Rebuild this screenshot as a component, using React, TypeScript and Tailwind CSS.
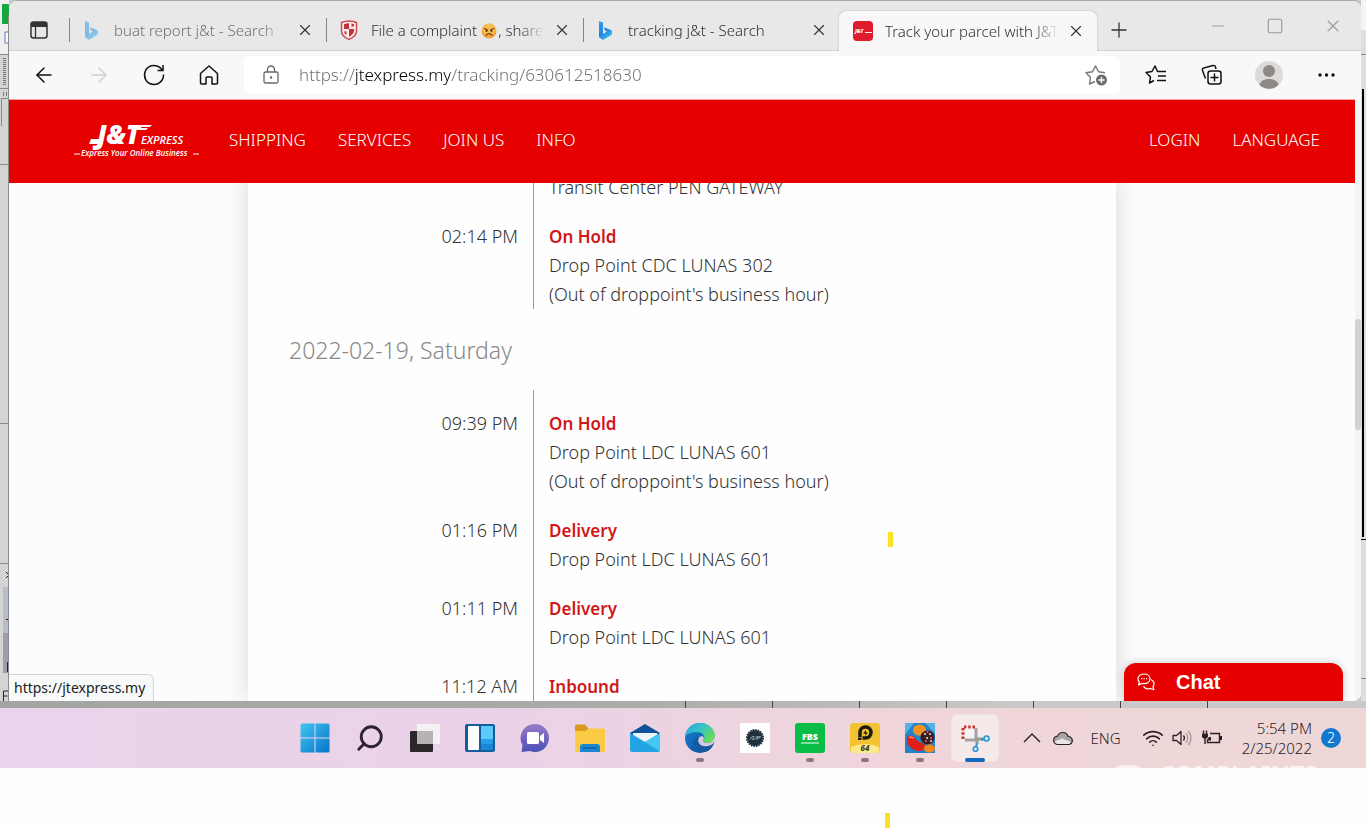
import React from 'react';
import {
  ArrowLeft,
  ArrowRight,
  ChevronUp,
  Minus,
  Plus,
  Search,
  Square,
  Wifi,
  X,
} from 'lucide-react';

type Entry = { time: string; status: string; lines: string[] };

const tabs = [
  { title: 'buat report j&t - Search', icon: <BingLogo />, dim: true, active: false },
  { title: 'File a complaint', icon: <ShieldLogo />, dim: false, active: false, emoji: true },
  { title: 'tracking j&t - Search', icon: <BingLogo />, dim: false, active: false },
  { title: 'Track your parcel with J&T', icon: <JntFavicon />, dim: false, active: true },
];

const fridayEntries: Entry[] = [
  { time: '02:14 PM', status: 'On Hold', lines: ['Drop Point CDC LUNAS 302', "(Out of droppoint's business hour)"] },
];

const saturdayEntries: Entry[] = [
  { time: '09:39 PM', status: 'On Hold', lines: ['Drop Point LDC LUNAS 601', "(Out of droppoint's business hour)"] },
  { time: '01:16 PM', status: 'Delivery', lines: ['Drop Point LDC LUNAS 601'] },
  { time: '01:11 PM', status: 'Delivery', lines: ['Drop Point LDC LUNAS 601'] },
  { time: '11:12 AM', status: 'Inbound', lines: [] },
];

/* ---------- favicons ---------- */

function BingLogo() {
  return (
    <svg className="h-5 w-5" viewBox="0 0 20 20" fill="none">
      <defs>
        <linearGradient id="bing" x1="3" y1="2" x2="16" y2="19" gradientUnits="userSpaceOnUse">
          <stop stopColor="#2f9ee8" />
          <stop offset="0.5" stopColor="#2384dd" />
          <stop offset="1" stopColor="#3ed0f5" />
        </linearGradient>
      </defs>
      <path d="M3 1 7 2.500V14l4-2.400-2-1L7.700 7.300 14 9.600c2.800 1.200 2.600 4.700.7 6l-7 4c-.5.3-1 .2-1.400-.1L3 17.200Z" fill="url(#bing)" />
    </svg>
  );
}

function ShieldLogo() {
  return (
    <svg className="h-5 w-5" viewBox="0 0 20 20" fill="none">
      <path d="M2.500 2.500Q10-.5 17.500 2.500V11c0 4-3.500 6.800-7.500 8.400C6 17.800 2.500 15 2.500 11Z" fill="#fbe9e9" stroke="#c8464e" strokeWidth="1.400" />
      <path d="M5 4.300Q7.500 3.300 10 3.300V9H5ZM10 9h5v2c0 2.500-2.500 4.500-5 5.800Z" fill="#c0323c" />
      <path d="M12.500 3.600 15 4.300V6.500h-2.500ZM5 11.500h2.500V15C6 14 5.200 12.800 5 11.500Z" fill="#c0323c" />
    </svg>
  );
}

function JntFavicon() {
  return (
    <svg className="h-5 w-5" viewBox="0 0 20 20">
      <rect width="20" height="20" rx="4" fill="#e01b2b" />
      <text x="2" y="12" fontSize="5" fontWeight="800" fontStyle="italic" fill="#fff" fontFamily="Open Sans, sans-serif">J&amp;T</text>
      <path d="M12 11.500h7" stroke="#fff" strokeWidth="1" />
    </svg>
  );
}

function AngryFace() {
  return (
    <svg className="mr-px ml-1 inline-block h-4 w-4 align-[-3px]" viewBox="0 0 16 16" fill="none">
      <circle cx="8" cy="8" r="7.500" fill="#f2a63b" />
      <circle cx="8" cy="6.500" r="6" fill="#f8bd4e" />
      <path d="m3.500 5.500 3 1.500M12.500 5.500l-3 1.500M5 12.300c1.500-2.200 4.500-2.200 6 0" stroke="#6b3a14" strokeWidth="1.200" strokeLinecap="round" />
      <circle cx="5.500" cy="8" r="1.100" fill="#6b3a14" />
      <circle cx="10.500" cy="8" r="1.100" fill="#6b3a14" />
    </svg>
  );
}

/* ---------- browser chrome ---------- */

function TabStrip() {
  return (
    <div className="flex h-[50px] shrink-0 items-end border-b border-[#d2d2d2] bg-[#e8e8e8]">
      <button aria-label="Tab actions" className="flex h-10 w-[60px] shrink-0 items-center justify-center">
        <svg className="h-[18px] w-[18px]" viewBox="0 0 18 18" fill="none">
          <rect x="1" y="1" width="16" height="16" rx="2.500" stroke="#333" strokeWidth="1.500" />
          <path d="M1 3.500A2.500 2.500 0 0 1 3.500 1h11A2.500 2.500 0 0 1 17 3.500V6H1Z" fill="#333" />
          <path d="M5.500 6v11" stroke="#333" strokeWidth="1.300" />
        </svg>
      </button>
      {tabs.map((tab) => (
        <div
          key={tab.title}
          className={
            tab.active
              ? '-mb-px -ml-px flex h-10 w-[258px] shrink-0 items-center rounded-t-lg bg-[#f8f8f8] pr-3 pb-px pl-[14px] shadow-[0_0_2px_rgba(0,0,0,0.25)] [clip-path:inset(-3px_-3px_0_-3px)]'
              : 'flex h-10 w-[257px] shrink-0 items-center pr-3'
          }
        >
          {!tab.active && <span className="mr-3 h-6 w-px bg-[#858585]" />}
          <span className={tab.dim ? 'opacity-50' : ''}>{tab.icon}</span>
          <button
            className={
              (tab.dim ? 'text-[#707070]' : 'text-[#303030]') +
              ' ml-3 w-[174px] overflow-hidden text-left text-[15px] leading-5 font-[350] whitespace-nowrap [mask-image:linear-gradient(90deg,#000_85%,transparent)]'
            }
          >
            {tab.title}
            {tab.emoji && <><AngryFace />, share</>}
          </button>
          <button aria-label={'Close ' + tab.title} className="ml-auto">
            <X className="h-[18px] w-[18px] text-[#333]" strokeWidth={1.5} />
          </button>
        </div>
      ))}
      <button aria-label="New tab" className="ml-2 flex h-10 w-7 items-center justify-center">
        <Plus className="h-6 w-6 text-[#333]" strokeWidth={1.3} />
      </button>
      <div className="mb-[14px] ml-auto flex items-center gap-[39px] pr-[18px] text-[#999]">
        <button aria-label="Minimize"><Minus className="h-[18px] w-[18px]" strokeWidth={1.3} /></button>
        <button aria-label="Maximize"><Square className="h-[18px] w-[18px]" strokeWidth={1.5} /></button>
        <button aria-label="Close window"><X className="h-5 w-5" strokeWidth={1.3} /></button>
      </div>
    </div>
  );
}

function AddressBar() {
  return (
    <div className="flex h-12 shrink-0 items-center bg-[#f8f8f8]">
      <div className="flex w-[235px] shrink-0 items-center gap-[31px] pl-[23px] text-[#111]">
        <button aria-label="Back">
          <ArrowLeft className="h-6 w-6" strokeWidth={1.5} />
        </button>
        <button aria-label="Forward" className="text-[#d0d0d0]">
          <ArrowRight className="h-6 w-6" strokeWidth={1.5} />
        </button>
        <button aria-label="Refresh">
          <svg className="h-6 w-6" viewBox="0 0 24 24" fill="none" stroke="currentColor" strokeWidth="1.500">
            <path d="M21.500 11.500A9.500 9.500 0 1 1 17.500 4.200L20.500 7M21 2v5.500h-5.500" />
          </svg>
        </button>
        <button aria-label="Home">
          <svg className="h-6 w-6" viewBox="0 0 24 24" fill="none" stroke="currentColor" strokeWidth="1.500" strokeLinejoin="round">
            <path d="M3.500 10.500 12 3l8.500 7.500V20a1 1 0 0 1-1 1H15v-6a1 1 0 0 0-1-1h-4a1 1 0 0 0-1 1v6H4.500a1 1 0 0 1-1-1Z" />
          </svg>
        </button>
      </div>
      <div className="flex h-[38px] flex-1 items-center rounded-md bg-white pr-3 pl-4">
        <svg className="h-[22px] w-[22px] text-[#666]" viewBox="0 0 22 22" fill="none" stroke="currentColor" strokeWidth="1.300">
          <rect x="4" y="8" width="14" height="11" rx="1.500" />
          <path d="M7.500 8V5.500a3.500 3.500 0 0 1 7 0V8" />
          <circle cx="11" cy="13.500" r=".6" fill="currentColor" />
        </svg>
        <input
          aria-label="Address"
          defaultValue="https://jtexpress.my/tracking/630612518630"
          className="ml-[17px] min-w-0 flex-1 bg-[linear-gradient(90deg,#6c6c6c_57px,#000_57px,#000_151px,#6c6c6c_151px)] bg-clip-text text-[17px] leading-6 font-light text-transparent caret-black outline-none"
        />
        <button aria-label="Add to favourites">
          <svg className="h-6 w-6" viewBox="0 0 24 24" fill="none">
            <path d="M11 18.500 5.500 21l1-6.500L2 9.800l6.500-1L11.500 3l3 5.800 6.500 1" stroke="#777" strokeWidth="1.400" strokeLinejoin="round" />
            <circle cx="17.500" cy="17" r="5.500" fill="#6d6d6d" />
            <path d="M17.500 14v6M14.500 17h6" stroke="#fff" strokeWidth="1.300" />
          </svg>
        </button>
      </div>
      <div className="flex shrink-0 items-center pr-[22px] pl-6 text-[#111]">
        <button aria-label="Favourites" className="mr-8">
          <svg className="h-6 w-6" viewBox="0 0 24 24" fill="none" stroke="currentColor" strokeWidth="1.500" strokeLinejoin="round">
            <path d="M10 17.500 5.500 20l1-6L2 9.500l6-1L11 3l2.500 5.500H22M14 13h8M13 17.500h9" />
          </svg>
        </button>
        <button aria-label="Collections" className="mr-[31px]">
          <svg className="h-6 w-6" viewBox="0 0 24 24" fill="none" stroke="currentColor" strokeWidth="1.500">
            <path d="M5.500 15.500 2.500 7.500a2 2 0 0 1 1.300-2.600L13 2.500a2 2 0 0 1 2.500 1.500l.5 2" />
            <rect x="8" y="8" width="13" height="13" rx="2.500" />
            <path d="M14.500 10.500v8M10.500 14.500h8" />
          </svg>
        </button>
        <button aria-label="Profile" className="mr-8">
          <svg className="h-7 w-7" viewBox="0 0 28 28">
            <circle cx="14" cy="14" r="14" fill="#dcdbd9" />
            <circle cx="14" cy="10" r="6" fill="#8d8987" />
            <path d="M4.500 24c1-8 18-8 19 0a14 14 0 0 1-19 0" fill="#8d8987" />
          </svg>
        </button>
        <button aria-label="Settings and more">
          <svg className="h-6 w-6" viewBox="0 0 24 24" fill="currentColor">
            <circle cx="5" cy="12" r="1.700" />
            <circle cx="11.500" cy="12" r="1.700" />
            <circle cx="18" cy="12" r="1.700" />
          </svg>
        </button>
      </div>
    </div>
  );
}

/* ---------- J&T page ---------- */

function SiteHeader() {
  return (
    <header className="flex h-[84px] shrink-0 items-center border-t border-[#f3a0a0] bg-[#e60000] pr-[35px] pb-1 pl-[65px] text-[17px] leading-6 font-[350] text-white">
      <a href="#" aria-label="J&T Express" className="mr-[30px] shrink-0">
        <svg className="h-12 w-[125px]" viewBox="0 0 125 48" fill="#fff" fontFamily="Open Sans, sans-serif" fontStyle="italic">
          <text x="23" y="28" fontSize="26" fontWeight="800">J&amp;T</text>
          <path d="M17 23h9l-1 5H15ZM60 9h18l-2 2H60ZM61 12h13l-2 2H61Z" />
          <text x="67" y="28" fontSize="11" fontWeight="600">EXPRESS</text>
          <text x="7" y="40" fontSize="8" fontWeight="600">Express Your Online Business</text>
          <path d="M0 38h6M119 38h6" stroke="#fff" strokeWidth="1" />
        </svg>
      </a>
      <nav className="flex gap-8">
        <a href="#">SHIPPING</a>
        <a href="#">SERVICES</a>
        <a href="#">JOIN US</a>
        <a href="#">INFO</a>
      </nav>
      <nav className="ml-auto flex gap-8">
        <a href="#">LOGIN</a>
        <a href="#">LANGUAGE</a>
      </nav>
    </header>
  );
}

function TrackingRow({ entry }: { entry: Entry }) {
  return (
    <li className="flex">
      <time className="w-[285px] shrink-0 pr-[15px] text-right">{entry.time}</time>
      <div className="pl-4">
        <h3 className="text-[17px] font-semibold text-[#d01818]">{entry.status}</h3>
        {entry.lines.map((line) => (
          <p key={line}>{line}</p>
        ))}
      </div>
    </li>
  );
}

function TrackingPage() {
  return (
    <main className="relative min-h-0 flex-1 overflow-hidden bg-[#fafcfd]">
      <div className="mx-auto min-h-full w-[868px] max-w-full bg-[#fefefe] text-lg leading-[29px] font-[350] text-[#333] shadow-[0_0_24px_rgba(0,0,0,0.14)]">
        <div className="-mt-[10px] bg-[linear-gradient(#999,#999)] bg-[length:1px_100%] bg-[position:285px_0] bg-no-repeat">
          <p className="mb-5 pl-[301px]">Transit Center PEN GATEWAY</p>
          <ul>
            {fridayEntries.map((entry) => <TrackingRow key={entry.time} entry={entry} />)}
          </ul>
        </div>
        <h2 className="pt-[27px] pb-[25px] pl-[41px] text-[23px] font-light text-[#888]">2022-02-19, Saturday</h2>
        <ul className="flex flex-col gap-5 bg-[linear-gradient(#999,#999)] bg-[length:1px_100%] bg-[position:285px_0] bg-no-repeat pt-[19px]">
          {saturdayEntries.map((entry) => <TrackingRow key={entry.time} entry={entry} />)}
        </ul>
      </div>

      <span className="absolute top-[349px] left-[879px] h-[15px] w-[5px] bg-[#fbe122]" />

      <div className="absolute bottom-0 left-0 rounded-tr-md border-t border-r border-[#d5d5d5] bg-[#f8f9f9] py-[3px] pr-2 pl-[5px] text-sm leading-5 text-[#222]">
        https://jtexpress.my
      </div>

      <button className="absolute right-3 bottom-0 flex h-[38px] w-[219px] items-center rounded-t-xl bg-[#e60000] pl-[13px] font-['Liberation_Sans',sans-serif] text-xl font-bold text-white shadow-[0_0_8px_rgba(0,0,0,0.2)]">
        <svg className="mr-[21px] h-[18px] w-[18px]" viewBox="0 0 18 18" fill="none" stroke="#fff" strokeWidth="1.200" strokeLinejoin="round">
          <path d="M7 1c3.500 0 6 2 6 4.800s-2.500 4.900-6 4.900l-2-.3L1.500 12l.9-2.900A4.500 4.500 0 0 1 1 5.800C1 3 3.500 1 7 1Z" />
          <path d="M14 6.500c4 2 3.500 5.500 2 7l.8 3.200-3.300-1.200c-3 1-5.500 0-7-2.200" />
          <path d="M4 5.700h1.200M6.500 5.700h1.200M9 5.700h1.200" />
        </svg>
        Chat
      </button>
    </main>
  );
}

/* ---------- taskbar ---------- */

function WindowsIcon() {
  return (
    <svg className="h-[30px] w-[30px]" viewBox="0 0 30 30">
      <defs>
        <linearGradient id="win" x1="0" y1="0" x2="1" y2="1">
          <stop stopColor="#43c6f2" />
          <stop offset="1" stopColor="#0573c8" />
        </linearGradient>
      </defs>
      <path d="M2 .5h12.500v14H.5V2A1.500 1.500 0 0 1 2 .5ZM15.500.5H28A1.500 1.500 0 0 1 29.500 2v12.500h-14ZM.5 15.500h14v14H2A1.500 1.500 0 0 1 .5 28ZM15.500 15.500h14V28a1.500 1.500 0 0 1-1.500 1.500H15.500Z" fill="url(#win)" />
    </svg>
  );
}

function TaskViewIcon() {
  return (
    <svg className="h-[30px] w-[30px]" viewBox="0 0 30 30">
      <rect x="0" y="8" width="23" height="21" rx="1" fill="#2b272b" />
      <rect x="7" y="1" width="23" height="20" rx="1" fill="#f4f1f4" />
      <path d="M7 8h16v13H7Z" fill="#b5b3b4" />
    </svg>
  );
}

function WidgetsIcon() {
  return (
    <svg className="h-[30px] w-[30px]" viewBox="0 0 30 30">
      <rect y="1" width="30" height="28" rx="2" fill="#155c9f" />
      <rect x="3" y="3" width="11" height="24" rx="1" fill="#fff" />
      <rect x="16" y="3" width="12" height="13" fill="#5ccbf7" />
      <rect x="16" y="16" width="12" height="5" fill="#259ee4" />
      <rect x="16" y="21" width="12" height="6" fill="#1b86d6" />
    </svg>
  );
}

function TeamsIcon() {
  return (
    <svg className="h-[30px] w-[30px]" viewBox="0 0 30 30">
      <defs>
        <linearGradient id="teams" x1="0" y1="0" x2="0" y2="1">
          <stop stopColor="#9a7bc8" />
          <stop offset="1" stopColor="#4b50b8" />
        </linearGradient>
      </defs>
      <path d="M15 1a14 14 0 1 1-5 27.100L1.500 29l1-7A14 14 0 0 1 15 1Z" fill="url(#teams)" />
      <rect x="7" y="9" width="12" height="12" rx="1.500" fill="#fff" />
      <path d="m20 13 4-3v10l-4-3Z" fill="#fff" />
    </svg>
  );
}

function FolderIcon() {
  return (
    <svg className="h-[30px] w-[30px]" viewBox="0 0 30 30">
      <path d="M0 3a1.500 1.500 0 0 1 1.500-1.500H10l3.500 4V9H0Z" fill="#dc9a1d" />
      <path d="M0 8h10l4-2.500h14.500A1.500 1.500 0 0 1 30 7v21a1 1 0 0 1-1 1H1a1 1 0 0 1-1-1Z" fill="#fbcb45" />
      <path d="M5 29v-5a3 3 0 0 1 3-3h14a3 3 0 0 1 3 3v5Z" fill="#1b86d2" />
      <path d="M8 25h14" stroke="#0f5ea6" strokeWidth="1.500" />
    </svg>
  );
}

function MailIcon() {
  return (
    <svg className="h-[30px] w-[30px]" viewBox="0 0 30 30">
      <path d="M0 10 15 1l15 9v4H0Z" fill="#10529a" />
      <path d="M3 10h24v5l-12 8-12-8Z" fill="#eef4f9" />
      <path d="m0 10 15 9 15-9v17a2 2 0 0 1-2 2H2a2 2 0 0 1-2-2Z" fill="#23a5e5" />
      <path d="m15 19 15-9v17c0 .5-.2 1-.5 1.300Z" fill="#46c7f3" />
    </svg>
  );
}

function EdgeIcon() {
  return (
    <svg className="h-[30px] w-[30px]" viewBox="0 0 30 30">
      <defs>
        <linearGradient id="edgeTop" x1="0" y1="0" x2="1" y2="0.6">
          <stop stopColor="#2ba6df" />
          <stop offset="0.5" stopColor="#35c2c8" />
          <stop offset="1" stopColor="#66dd5a" />
        </linearGradient>
        <linearGradient id="edgeLow" x1="0" y1="0" x2="1" y2="1">
          <stop stopColor="#1681d6" />
          <stop offset="1" stopColor="#0f4a95" />
        </linearGradient>
      </defs>
      <circle cx="15" cy="15" r="15" fill="url(#edgeLow)" />
      <path d="M0 14C1 5 7 0 15 0c9 0 15 6 15 13 0 5-4 7-7.500 7-3 0-5-1.200-4-2.800 2-3 0-8-6-8C6 9 1 11 0 14Z" fill="url(#edgeTop)" />
      <path d="M17.500 13c-4 0-6 5-3 8.500 3 3 9 2.500 13.500-.5l1-2 1 3-4 4 4 4V12c0 5-4 8-7.500 8-3 0-5-1.200-4-2.800.8-1.500.5-3-1-4.200Z" fill="#ecd5e3" opacity=".9" />
      <path d="M9 16c-1 7 5 13 11 13 4-1 7-4 8-7-5 3-17 2-14.500-7Z" fill="#17589f" />
    </svg>
  );
}

function GearIcon() {
  return (
    <svg className="h-[30px] w-[30px]" viewBox="0 0 30 30">
      <rect width="30" height="30" fill="#fff" />
      <circle cx="15" cy="15" r="8" fill="#1f313d" />
      <circle cx="15" cy="15" r="8.300" fill="none" stroke="#1f313d" strokeWidth="1.500" strokeDasharray="1.600 1" />
      <path d="M10 16.500 12 13.500h2l-1.500 3h2l2-3h1.500l-1.500 3M17.500 16.500l1.500-3h1.500l-1 1.500H18" stroke="#8ba0ad" strokeWidth="1" fill="none" />
    </svg>
  );
}

function FbsIcon() {
  return (
    <svg className="h-[30px] w-[30px]" viewBox="0 0 30 30">
      <rect width="30" height="30" rx="3" fill="#09bd45" />
      <text x="15" y="17" textAnchor="middle" fontSize="9" fontWeight="800" fill="#fff" fontFamily="Open Sans, sans-serif">FBS</text>
      <path d="M6 20h18" stroke="#fff" strokeWidth="1" />
    </svg>
  );
}

function LdPlayerIcon() {
  return (
    <svg className="h-[30px] w-[30px]" viewBox="0 0 30 30">
      <rect width="30" height="30" rx="4" fill="#f2c230" />
      <path d="M1 24q14-6 28 0v3a3 3 0 0 1-3 3H4a3 3 0 0 1-3-3Z" fill="#fbe98c" />
      <path d="M10 14V9.500a5.500 5.500 0 1 1 5.500 5.500H12.500" fill="none" stroke="#1d1a10" strokeWidth="3.500" />
      <rect x="8" y="14.500" width="3.500" height="2.500" fill="#1d1a10" />
      <path d="m16 7-3 3.500h2.500L15 13l3-3.500h-2Z" fill="#1d1a10" />
      <text x="15" y="28" textAnchor="middle" fontSize="8" fontWeight="700" fontStyle="italic" fill="#3a3213" fontFamily="Open Sans, sans-serif">64</text>
    </svg>
  );
}

function CandyIcon() {
  return (
    <svg className="h-[30px] w-[30px]" viewBox="0 0 30 30">
      <rect width="30" height="30" fill="#2583c9" />
      <path d="M0 0h9L0 12ZM20 0h10v10Z" fill="#55b2e6" />
      <ellipse cx="14.500" cy="7" rx="6.500" ry="5.500" fill="#f29222" />
      <circle cx="22.500" cy="14.500" r="7" fill="#3b1d1c" />
      <g fill="#f5e6d6">
        <circle cx="20" cy="11" r="1" /><circle cx="25" cy="11" r="1" /><circle cx="22" cy="15" r="1" /><circle cx="26" cy="18" r="1" />
      </g>
      <g fill="#ef5a8a">
        <circle cx="26" cy="15" r="1" /><circle cx="22.500" cy="9" r="1" /><circle cx="21" cy="18" r="1" />
      </g>
      <path d="M2 16c0-4 6-5 8-1 2 3 5 4 9 6 3 3-1 8-6 7C6 27 1 21 2 16Z" fill="#de1f16" />
      <path d="M4.500 15c1-1.500 3-1 4 .5" stroke="#ff8d7c" strokeWidth="1.500" fill="none" />
      <ellipse cx="24.500" cy="25.500" rx="5.500" ry="4" fill="#f58a1b" />
    </svg>
  );
}

function SnipIcon() {
  return (
    <svg className="h-[30px] w-[30px]" viewBox="0 0 30 30" fill="none">
      <rect x="4" y="5" width="12" height="11" fill="#f5f3f3" />
      <path d="M16 5v12H5" stroke="#a5a2a2" strokeWidth="3" strokeLinejoin="round" />
      <path d="M15 4H3v12" stroke="#c8392b" strokeWidth="3" strokeDasharray="2.500 1.800" />
      <path d="M17 15v6M17 16h6" stroke="#9a9a9a" strokeWidth="3" />
      <circle cx="15.500" cy="26" r="2.300" stroke="#2196d8" strokeWidth="1.600" />
      <circle cx="26.500" cy="15.500" r="2.500" stroke="#2196d8" strokeWidth="1.600" />
      <path d="m16 23.500 1-3M24 16l-3 1" stroke="#2196d8" strokeWidth="2" />
    </svg>
  );
}

const apps = [
  { name: 'Start', icon: <WindowsIcon />, state: '' },
  { name: 'Search', icon: <Search className="h-[30px] w-[30px] -scale-x-100 text-[#2c2430]" strokeWidth={2.3} />, state: '' },
  { name: 'Task view', icon: <TaskViewIcon />, state: '' },
  { name: 'Widgets', icon: <WidgetsIcon />, state: '' },
  { name: 'Teams', icon: <TeamsIcon />, state: '' },
  { name: 'File Explorer', icon: <FolderIcon />, state: '' },
  { name: 'Mail', icon: <MailIcon />, state: '' },
  { name: 'Edge', icon: <EdgeIcon />, state: 'open' },
  { name: 'Launcher', icon: <GearIcon />, state: '' },
  { name: 'FBS', icon: <FbsIcon />, state: 'open' },
  { name: 'Player 64', icon: <LdPlayerIcon />, state: 'open' },
  { name: 'Candy', icon: <CandyIcon />, state: 'open' },
  { name: 'Snipping Tool', icon: <SnipIcon />, state: 'active' },
];

function Taskbar() {
  return (
    <div className="relative flex h-[60px] shrink-0 items-center overflow-hidden bg-[linear-gradient(90deg,#e9d4eb,#ebd2e8_35%,#efd5da_65%,#efd7d6)] pr-[25px] pl-[287px] text-[#2a1f26]">
      {apps.map((app) => (
        <button
          key={app.name}
          aria-label={app.name}
          className="relative flex h-full w-[55px] shrink-0 items-center justify-center"
        >
          <span
            className={
              app.state === 'active'
                ? 'flex h-12 w-12 items-center justify-center rounded-md border border-[#f0e4e6] bg-[#f5e9ea]'
                : 'flex h-12 w-12 items-center justify-center'
            }
          >
            {app.icon}
          </span>
          {app.state === 'open' && <span className="absolute bottom-[6px] left-6 h-1 w-2 rounded-full bg-[#8d7480]" />}
          {app.state === 'active' && <span className="absolute bottom-[6px] left-[18px] h-1 w-5 rounded-full bg-[#1567b8]" />}
        </button>
      ))}
      <div className="ml-auto flex items-center text-[15px] leading-5 font-[350]">
        <svg className="mr-[11px] h-5 w-5" viewBox="0 0 20 20" fill="none" stroke="currentColor" strokeWidth="1.400">
          <path d="m2 14 8-8 8 8" />
        </svg>
        <svg className="mr-[18px] h-[18px] w-5" viewBox="0 0 20 18">
          <path d="M5 15.500a4.200 4.200 0 0 1-.4-8.400 5.600 5.600 0 0 1 10.600.4 4 4 0 0 1 .3 8Z" fill="#a9a3a5" stroke="#2a1f26" strokeWidth="1.200" />
          <path d="M2 13c2-3 5-1.500 7-4 2 2 6 3 9 3.500-.4 1.500-1.300 2.400-2.500 2.400H5c-1.400 0-2.400-.8-3-1.900" fill="#e9e4e6" />
        </svg>
        <span className="mr-[21px]">ENG</span>
        <Wifi className="mr-2 h-[22px] w-[22px]" strokeWidth={1.8} />
        <svg className="mr-[10px] h-5 w-5" viewBox="0 0 20 20" fill="none" stroke="currentColor" strokeWidth="1.300" strokeLinejoin="round">
          <path d="M1 7.500h3.500L9 3.500v13l-4.500-4H1Z" />
          <path d="M11.500 7.500q2 2.500 0 5" />
          <path d="M14 5q3.500 5 0 10M16.500 3q5 7 0 14" opacity=".35" />
        </svg>
        <svg className="mr-5 h-5 w-5" viewBox="0 0 20 20" fill="none" stroke="currentColor" strokeWidth="1.400">
          <path d="M8 5.500h9.500v9H5.500v-3" />
          <path d="M18 8h2v4h-2ZM0 5.500h6V9L4.500 10.500h-3L0 9ZM7 9h2v3.500H5.500V11Z" fill="currentColor" stroke="none" />
          <path d="M1.500 2.500v3M4.500 2.500v3M3 10v6" />
        </svg>
        <div className="mr-[9px] text-right whitespace-nowrap">
          <p>5:54 PM</p>
          <p>2/25/2022</p>
        </div>
        <span className="flex h-5 w-5 items-center justify-center rounded-full bg-[#1278cf] text-sm text-white">2</span>
      </div>
      <span aria-hidden="true" className="absolute top-[57px] left-[1108px] h-8 w-10 rounded-full bg-[#fbf3f3]" />
      <span aria-hidden="true" className="absolute top-[52px] right-[49px] text-[24px] leading-7 font-bold text-[#fbf3f3]">COMPLAINTS</span>
    </div>
  );
}

/* slice of the spreadsheet left open behind the browser */
function BackgroundLeft() {
  return (
    <svg className="w-[9px] shrink-0 self-stretch bg-[#d3d4d3]" viewBox="0 0 9 701" preserveAspectRatio="xMidYMin slice">
      <rect width="9" height="54" fill="#efefef" />
      <rect x="2" y="4" width="7" height="20" rx="1" fill="#12a83c" />
      <path d="M9 32H5v11h4" stroke="#5a78c8" fill="#fff" />
      <path d="M0 54.500h9M0 88.500h9M1 98.500h8M1.500 98v28M0 164.500h9M0 423.500h9M0 563.500h9" stroke="#8a8a8a" />
      <path d="M4.500 58v28" stroke="#777" strokeWidth="3" strokeDasharray="1 1" />
      <path d="M3.500 92v4M6.500 92v4" stroke="#777" />
      <rect x="3" y="587" width="6" height="46" fill="#b9bccb" />
      <rect x="3" y="633" width="6" height="40" fill="#9c9eb0" />
      <path d="m6 572 3 3-3 3M6 619.500h3M7.500 662v10M3.500 702v-11h5M3.500 696h4" stroke="#222" fill="none" />
      <path d="M8.500 15v686" stroke="#8b8b8b" />
    </svg>
  );
}

function BackgroundRight() {
  return (
    <svg className="w-[5px] shrink-0 self-stretch bg-[#dedede]" viewBox="0 0 5 701" preserveAspectRatio="xMidYMin slice">
      <rect width="5" height="30" fill="#f4f4f4" />
      <path d="M0 54.500h5M0 678.500h5" stroke="#8a8a8a" />
      <rect x="1" y="89" width="2" height="448" fill="#000" />
      <path d="M0 539.500h5" stroke="#000" />
    </svg>
  );
}

export default function App() {
  return (
    <div className="flex h-screen flex-col overflow-hidden bg-[#fefefe] font-['Noto_Sans','Open_Sans',sans-serif]">
      <div className="flex min-h-0 flex-1 flex-col bg-[#c9c9c9]">
        <div className="flex min-h-0 flex-1">
          <BackgroundLeft />
          <div className="flex min-w-0 flex-1 flex-col overflow-hidden rounded-t-lg rounded-br-lg border-t border-[#a8a8a8] bg-[#f4f5f5]">
            <TabStrip />
            <AddressBar />
            <div className="flex min-h-0 flex-1">
              <div className="flex min-w-0 flex-1 flex-col">
                <SiteHeader />
                <TrackingPage />
              </div>
              <div className="w-[6px] shrink-0 bg-[#f3f4f4] pt-[220px]">
                <div className="h-[111px] rounded-sm bg-[#d0d1d1]" />
              </div>
            </div>
          </div>
          <BackgroundRight />
        </div>
        <div className="flex h-[7px] shrink-0 justify-end gap-[86px] bg-[linear-gradient(90deg,#a3a5a2,#a9aba6_45%,#c9c9c9_75%)] pr-[158px]">
          {[1, 2, 3, 4, 5, 6, 7].map((n) => (
            <span key={n} className="w-px bg-[#444]" />
          ))}
        </div>
      </div>
      <Taskbar />
      <div className="h-[60px] shrink-0 pt-[45px] pl-[885px]">
        <div className="h-[15px] w-[5px] bg-[#fbe122]" />
      </div>
    </div>
  );
}
